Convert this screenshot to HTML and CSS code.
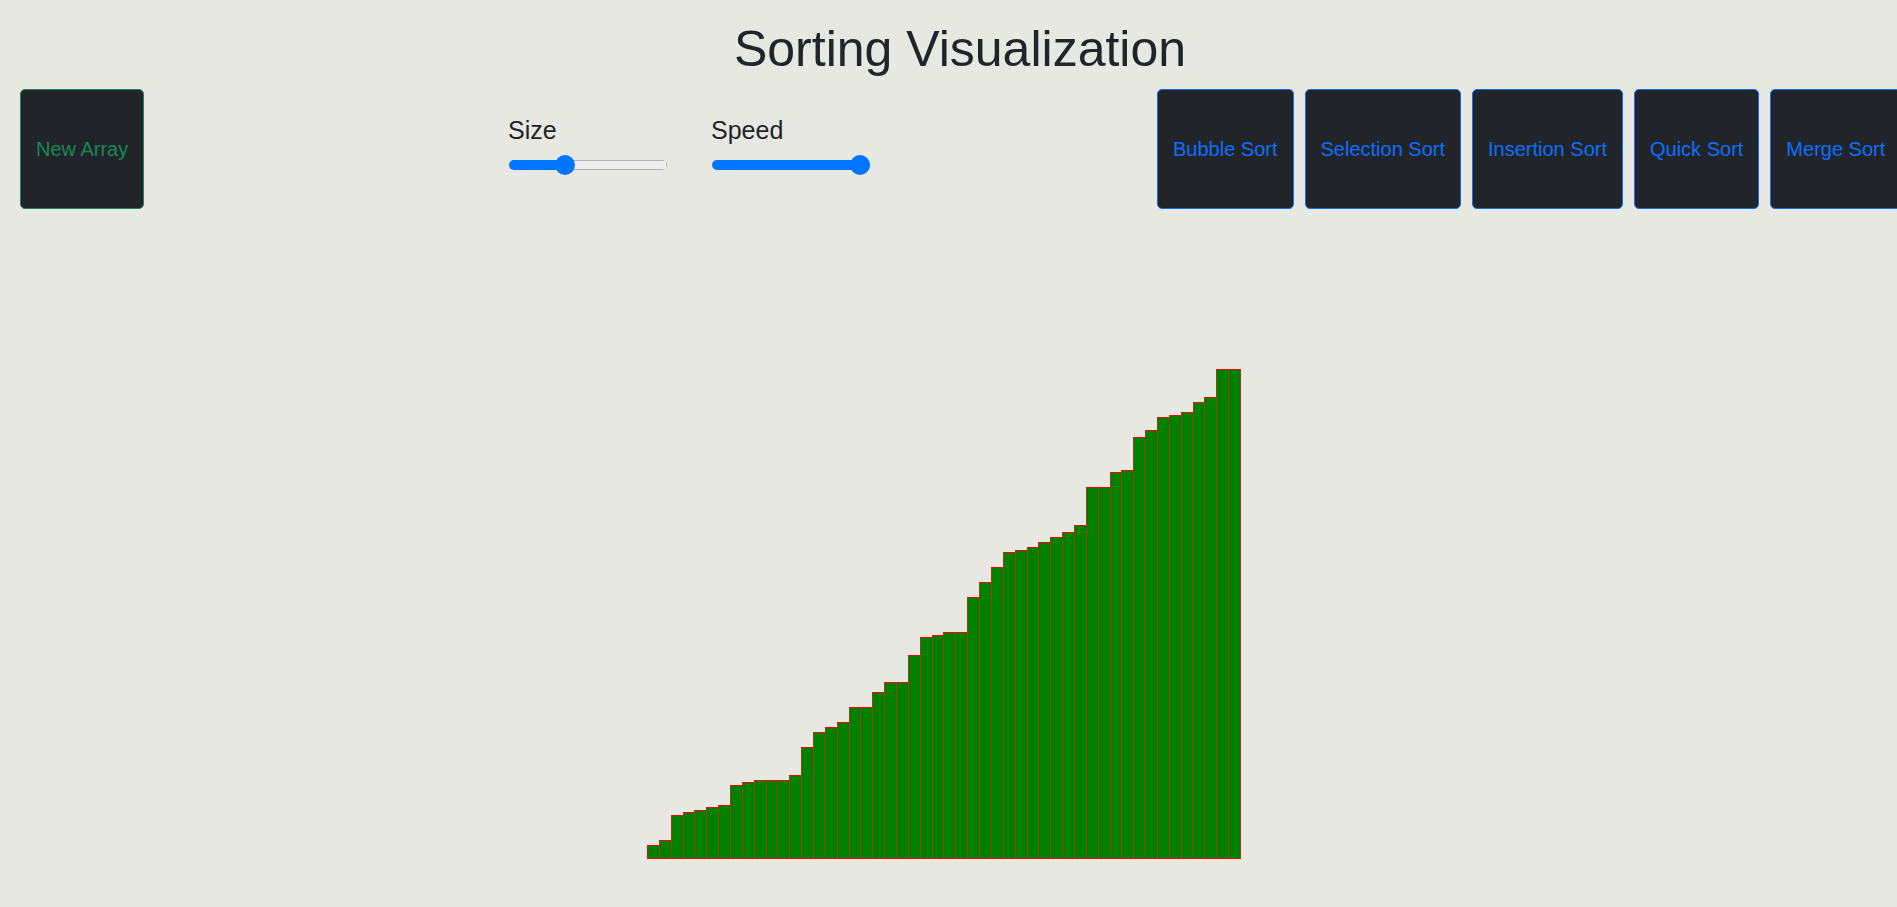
FILE: index.html
```html
<!DOCTYPE html>
<html lang="en">
<head>
<meta charset="utf-8">
<title>Sorting Visualization</title>
<link rel="stylesheet" href="styles.css">
</head>
<body>
<div class="page">
  <h1 class="title">Sorting Visualization</h1>
  <div class="controls">
    <div class="col-left">
      <button class="btn btn-green">New Array</button>
    </div>
    <div class="col-mid">
      <div class="slider">
        <label class="slider-label" for="size">Size</label>
        <input class="range" id="size" type="range" min="0" max="150" value="50" style="--p: 56px">
      </div>
      <div class="slider">
        <label class="slider-label" for="speed">Speed</label>
        <input class="range" id="speed" type="range" min="0" max="100" value="100" style="--p: 100%">
      </div>
    </div>
    <div class="col-right">
      <button class="btn btn-blue">Bubble Sort</button>
      <button class="btn btn-blue">Selection Sort</button>
      <button class="btn btn-blue">Insertion Sort</button>
      <button class="btn btn-blue">Quick Sort</button>
      <button class="btn btn-blue">Merge Sort</button>
    </div>
  </div>
  <div class="chart">
    <div class="bars">
      <div class="bar" style="height:14px"></div>
      <div class="bar" style="height:19px"></div>
      <div class="bar" style="height:44px"></div>
      <div class="bar" style="height:47px"></div>
      <div class="bar" style="height:49px"></div>
      <div class="bar" style="height:52px"></div>
      <div class="bar" style="height:54px"></div>
      <div class="bar" style="height:74px"></div>
      <div class="bar" style="height:77px"></div>
      <div class="bar" style="height:79px"></div>
      <div class="bar" style="height:79px"></div>
      <div class="bar" style="height:79px"></div>
      <div class="bar" style="height:84px"></div>
      <div class="bar" style="height:112px"></div>
      <div class="bar" style="height:127px"></div>
      <div class="bar" style="height:132px"></div>
      <div class="bar" style="height:137px"></div>
      <div class="bar" style="height:152px"></div>
      <div class="bar" style="height:152px"></div>
      <div class="bar" style="height:167px"></div>
      <div class="bar" style="height:177px"></div>
      <div class="bar" style="height:177px"></div>
      <div class="bar" style="height:204px"></div>
      <div class="bar" style="height:222px"></div>
      <div class="bar" style="height:224px"></div>
      <div class="bar" style="height:227px"></div>
      <div class="bar" style="height:227px"></div>
      <div class="bar" style="height:262px"></div>
      <div class="bar" style="height:277px"></div>
      <div class="bar" style="height:292px"></div>
      <div class="bar" style="height:307px"></div>
      <div class="bar" style="height:309px"></div>
      <div class="bar" style="height:312px"></div>
      <div class="bar" style="height:317px"></div>
      <div class="bar" style="height:322px"></div>
      <div class="bar" style="height:327px"></div>
      <div class="bar" style="height:334px"></div>
      <div class="bar" style="height:372px"></div>
      <div class="bar" style="height:372px"></div>
      <div class="bar" style="height:387px"></div>
      <div class="bar" style="height:389px"></div>
      <div class="bar" style="height:422px"></div>
      <div class="bar" style="height:429px"></div>
      <div class="bar" style="height:442px"></div>
      <div class="bar" style="height:444px"></div>
      <div class="bar" style="height:447px"></div>
      <div class="bar" style="height:457px"></div>
      <div class="bar" style="height:462px"></div>
      <div class="bar" style="height:490px"></div>
      <div class="bar" style="height:490px"></div>
    </div>
  </div>
</div>
</body>
</html>
```
FILE: styles.css
```css
html, body {
  margin: 0;
  padding: 0;
  height: 100%;
  overflow: hidden;
}

body {
  background: #e7e8e2;
  color: #212529;
  font-family: "Liberation Sans", Arial, sans-serif;
}

.page {
  width: 1920px;
}

.title {
  margin: 0;
  padding-top: 19px;
  font-size: 50px;
  line-height: 60px;
  font-weight: 400;
  text-align: center;
  color: #212529;
}

.controls {
  display: flex;
  align-items: flex-start;
  margin-top: 10px;
  padding-left: 20px;
}

.col-left {
  width: 488px;
  flex: none;
}

.col-mid {
  width: 649px;
  flex: none;
  display: flex;
  gap: 44px;
  padding-top: 27px;
}

.col-right {
  display: flex;
  gap: 11px;
  flex: none;
}

.btn {
  box-sizing: border-box;
  height: 120px;
  padding: 0 15px;
  border: 1px solid;
  border-radius: 5px;
  background: #212529;
  font-family: "Liberation Sans", Arial, sans-serif;
  font-size: 20px;
  line-height: 24px;
  white-space: nowrap;
  cursor: pointer;
}

.btn-green {
  color: #198754;
  border-color: #198754;
}

.btn-blue {
  color: #0d6efd;
  border-color: #0d6efd;
}

.slider {
  display: flex;
  flex-direction: column;
  align-items: flex-start;
  gap: 10px;
}

.slider-label {
  font-size: 25px;
  line-height: 29px;
  color: #212529;
}

.range {
  -webkit-appearance: none;
  appearance: none;
  width: 158px;
  height: 20px;
  margin: 0 0 0 1px;
  padding: 0;
  background: transparent;
}

.range::-webkit-slider-runnable-track {
  height: 10px;
  border-radius: 5px;
  background:
    linear-gradient(to right, transparent var(--p), #efefef var(--p)) center / calc(100% - 2px) calc(100% - 2px) no-repeat,
    linear-gradient(to right, #0075ff var(--p), #b2b2b2 var(--p));
}

.range::-webkit-slider-thumb {
  -webkit-appearance: none;
  appearance: none;
  width: 20px;
  height: 20px;
  margin-top: -5px;
  border: none;
  border-radius: 50%;
  background: #0075ff;
}

.chart {
  height: 650px;
  display: flex;
  align-items: flex-end;
}

.bars {
  display: flex;
  align-items: flex-end;
  width: 594px;
  margin-left: 647px;
}

.bar {
  flex: 1 1 0;
  box-sizing: border-box;
  background: #008000;
  border-top: 1px solid #ff0000;
  border-bottom: 1px solid #ff0000;
  border-left: 1px solid #a33a16;
}

.bar:first-child {
  border-left-color: #ff0000;
}

.bar:last-child {
  border-right: 1px solid #a33a16;
}
```
